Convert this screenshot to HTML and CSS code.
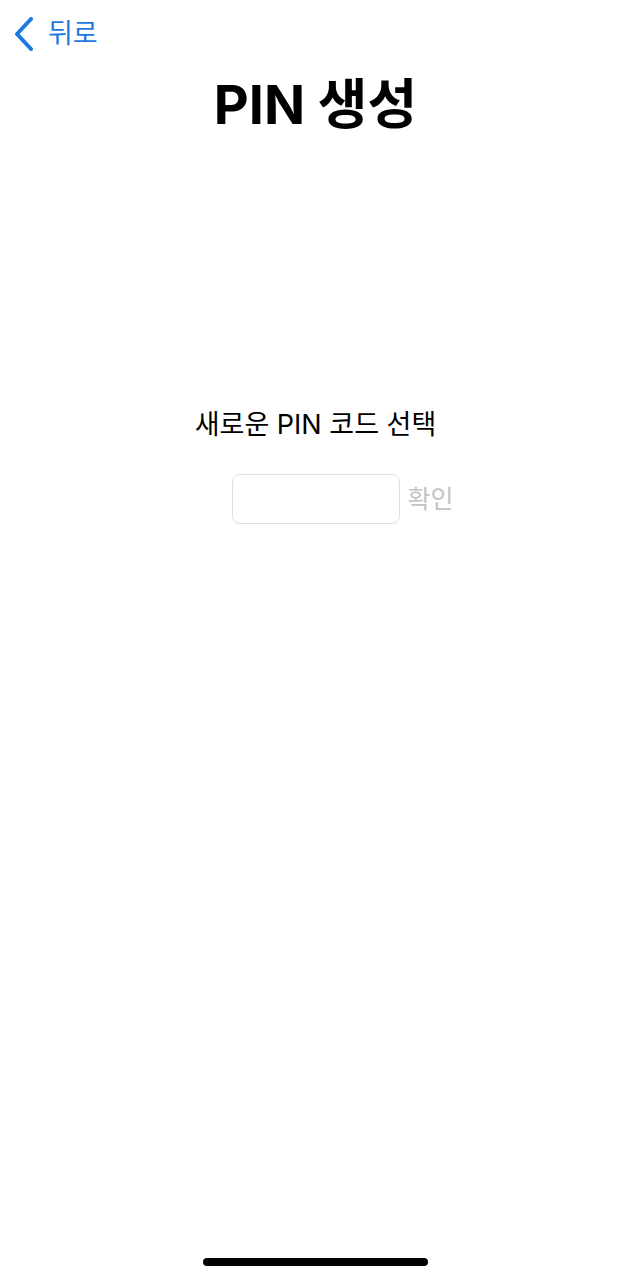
FILE: index.html
```html
<!DOCTYPE html>
<html lang="ko">
<head>
    <meta charset="UTF-8">
    <meta name="viewport" content="width=device-width, initial-scale=1.0">
    <title>PIN 생성</title>
    <link rel="stylesheet" href="styles.css">
</head>
<body>
    <div class="screen">
        <!-- Top navigation -->
        <div class="nav">
            <a class="back" href="#">
                <svg class="chevron" width="20" height="34" viewBox="0 0 20 34">
                    <path d="M17 2 L3 17 L17 32" fill="none" stroke="#1f78e0" stroke-width="4" stroke-linecap="round" stroke-linejoin="round"/>
                </svg>
                <span>뒤로</span>
            </a>
        </div>

        <h1 class="title">PIN 생성</h1>

        <!-- PIN form -->
        <div class="pin-form">
            <p class="label">새로운 PIN 코드 선택</p>
            <div class="pin-row">
                <input class="pin-input" type="password" inputmode="numeric">
                <button class="confirm" disabled>확인</button>
            </div>
        </div>

        <div class="home-indicator"></div>
    </div>
</body>
</html>
```

FILE: styles.css
```css
body {
    margin: 0;
    padding: 0;
    background-color: #fff;
    font-family: Inter, "Noto Sans CJK KR", sans-serif;
    color: #000;
}
.screen {
    min-height: 1280px;
    display: flex;
    flex-direction: column;
}
.nav {
    padding: 17px 0 0 14px;
    height: 34px;
}
.back {
    display: inline-flex;
    align-items: center;
    gap: 14px;
    color: #1f78e0;
    text-decoration: none;
    font-size: 27px;
    line-height: 34px;
}
.chevron {
    display: block;
}
.title {
    margin: 22px 0 0;
    text-align: center;
    font-size: 54px;
    font-weight: 700;
    line-height: 64px;
}
.pin-form {
    margin-top: 271px;
    display: flex;
    flex-direction: column;
    align-items: center;
}
.label {
    margin: 0;
    font-size: 27px;
    line-height: 34px;
}
.pin-row {
    margin-top: 32px;
    width: 100%;
    display: grid;
    grid-template-columns: 1fr auto 1fr;
    align-items: center;
}
.pin-input {
    grid-column: 2;
    width: 168px;
    height: 50px;
    box-sizing: border-box;
    border: 1px solid #e0e0e0;
    border-radius: 8px;
    outline: none;
    font-size: 20px;
}
.confirm {
    justify-self: start;
    background: none;
    border: none;
    padding: 0 0 0 8px;
    color: #c4c4c4;
    font-family: inherit;
    font-size: 25px;
    line-height: 30px;
}
.home-indicator {
    margin: auto auto 14px;
    width: 225px;
    height: 8px;
    border-radius: 4px;
    background-color: #000;
}
```
